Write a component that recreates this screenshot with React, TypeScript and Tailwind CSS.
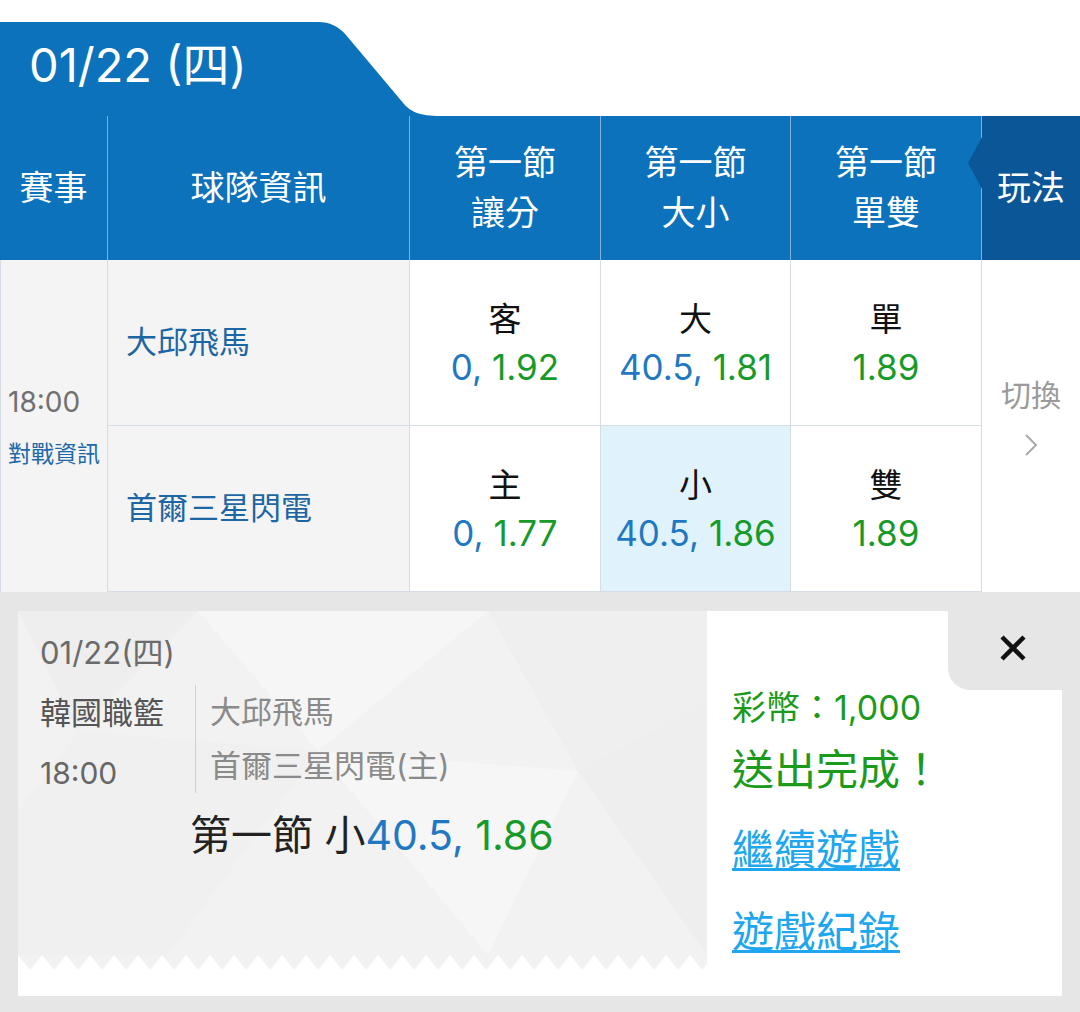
import React from "react";

const zigzag =
  "0,0 " +
  Array.from({ length: 29 }, (_, i) => `${i * 24 + 12},15 ${(i + 1) * 24},0`).join(" ");

function HeadCell({ lines }: { lines: string[] }) {
  return (
    <div className="flex flex-col items-center justify-center border-r border-[#7fb2dd]">
      {lines.map((l) => (
        <span key={l}>{l}</span>
      ))}
    </div>
  );
}

function OddsCell({
  label,
  line,
  price,
  active,
}: {
  label: string;
  line?: string;
  price: string;
  active?: boolean;
}) {
  return (
    <div
      className={`flex flex-col items-center justify-center border-r border-b border-[#d6dce4] ${
        active ? "bg-[#e0f3fc]" : "bg-white"
      }`}
    >
      <span className="text-[33px] leading-[48px] text-[#111]">{label}</span>
      <span className="text-[35px] leading-[48px]">
        {line && <span className="text-[#1f78c1]">{line}, </span>}
        <span className="text-[#189a2a]">{price}</span>
      </span>
    </div>
  );
}

function TeamCell({ name }: { name: string }) {
  return (
    <div className="flex items-center border-r border-b border-[#d6dce4] bg-[#f4f4f4] pl-[18px] text-[31px] text-[#1c66a3]">
      {name}
    </div>
  );
}

export default function App() {
  return (
    <div className="h-[1012px] w-[1080px] overflow-hidden bg-white font-['Inter','Noto_Sans_CJK_TC',sans-serif]">
      {/* date tab */}
      <div className="flex h-[116px] items-end">
        <div className="flex h-[94px] w-[300px] items-center bg-[#0c72bb] pb-[8px] pl-[29px] text-[47px] text-white">
          01/22 (四)
        </div>
        <svg width="140" height="94" viewBox="0 0 140 94" className="block">
          <path
            d="M0 0 H18 C30 0 38 4 46 13 L104 82 C111 90 120 94 140 94 H0 Z"
            fill="#0c72bb"
          />
        </svg>
      </div>

      {/* header row */}
      <div className="grid h-[144px] grid-cols-[108px_302px_191px_190px_191px_98px] bg-[#0c72bb] text-[34px] leading-[50px] text-white">
        <HeadCell lines={["賽事"]} />
        <HeadCell lines={["球隊資訊"]} />
        <HeadCell lines={["第一節", "讓分"]} />
        <HeadCell lines={["第一節", "大小"]} />
        <HeadCell lines={["第一節", "單雙"]} />
        <div className="relative flex items-center justify-center bg-[#0a5696]">
          玩法
          <span className="absolute left-[-14px] top-[21px] z-10 h-0 w-0 border-y-[26px] border-r-[14px] border-y-transparent border-r-[#0a5696]" />
        </div>
      </div>

      {/* body */}
      <div className="grid h-[332px] grid-cols-[108px_302px_191px_190px_191px_98px] grid-rows-[166px_166px]">
        <div className="row-span-2 flex flex-col justify-center border-l border-r border-[#d6dce4] bg-[#f4f4f4] pl-[7px]">
          <span className="text-[28px] leading-[36px] text-[#707070]">18:00</span>
          <span className="mt-[20px] text-[23px] leading-[28px] text-[#1e6aa8]">對戰資訊</span>
        </div>
        <TeamCell name="大邱飛馬" />
        <OddsCell label="客" line="0" price="1.92" />
        <OddsCell label="大" line="40.5" price="1.81" />
        <OddsCell label="單" price="1.89" />
        <div className="row-span-2 flex flex-col items-center justify-center bg-white pb-[20px]">
          <span className="text-[30px] leading-[40px] text-[#9a9a9a]">切換</span>
          <svg width="14" height="24" viewBox="0 0 14 24" className="mt-[18px]">
            <polyline points="2,2 12,12 2,22" fill="none" stroke="#aaaaaa" strokeWidth="2" />
          </svg>
        </div>
        <TeamCell name="首爾三星閃電" />
        <OddsCell label="主" line="0" price="1.77" />
        <OddsCell label="小" line="40.5" price="1.86" active />
        <OddsCell label="雙" price="1.89" />
      </div>

      {/* bet slip */}
      <div className="h-[420px] bg-[#e6e6e6] px-[18px] pt-[19px]">
        <div className="flex h-[385px]">
          <div className="flex w-[689px] flex-col bg-white">
            <div className="relative h-[344px] bg-[#f2f2f2]">
              <svg className="absolute inset-0" width="689" height="344" viewBox="0 0 689 344">
                <polygon points="0,0 180,0 60,120" fill="#eeeeee" />
                <polygon points="180,0 470,0 300,140" fill="#f6f6f6" />
                <polygon points="470,0 689,0 689,90 560,160" fill="#efefef" />
                <polygon points="60,120 300,140 150,344 0,344 0,200" fill="#f0f0f0" />
                <polygon points="300,140 560,160 470,344" fill="#f6f6f6" />
                <polygon points="560,160 689,90 689,344" fill="#eeeeee" />
              </svg>
              <div className="relative pl-[22px] pt-[22px]">
                <div className="text-[31px] leading-[40px] text-[#6b6b6b]">01/22(四)</div>
                <div className="mt-[12px] flex items-start">
                  <div className="flex w-[155px] flex-col">
                    <span className="text-[31px] leading-[56px] text-[#555]">韓國職籃</span>
                    <span className="mt-[4px] text-[30px] leading-[56px] text-[#666]">18:00</span>
                  </div>
                  <div className="flex flex-col border-l border-[#cfcfcf] pl-[14px] text-[31px] leading-[54px] text-[#8a8a8a]">
                    <span>大邱飛馬</span>
                    <span>首爾三星閃電(主)</span>
                  </div>
                </div>
                <div className="ml-[150px] mt-[9px] text-[41px] leading-[50px] text-[#222]">
                  第一節 小<span className="text-[#1f78c1]">40.5, </span>
                  <span className="text-[#189a2a]">1.86</span>
                </div>
              </div>
            </div>
            <svg width="689" height="15" viewBox="0 0 689 15" className="block">
              <polygon points={zigzag} fill="#f2f2f2" />
            </svg>
          </div>

          <div className="relative flex flex-1 flex-col items-start bg-white pl-[25px] pt-[75px]">
            <div className="absolute right-0 top-0 h-[79px] w-[114px] rounded-bl-[22px] bg-[#e6e6e6] pl-[50px] pt-[22px]">
              <svg width="30" height="30" viewBox="0 0 30 30">
                <path d="M4 4 L26 26 M26 4 L4 26" stroke="#111" strokeWidth="4.5" />
              </svg>
            </div>
            <span className="text-[34px] leading-[44px] text-[#1b9a1b]">彩幣：1,000</span>
            <span className="text-[42px] leading-[80px] text-[#1b9a1b]">送出完成！</span>
            <span className="text-[42px] leading-[80px] text-[#1ea6ee] underline decoration-[3px] underline-offset-[3px]">
              繼續遊戲
            </span>
            <span className="text-[42px] leading-[84px] text-[#1ea6ee] underline decoration-[3px] underline-offset-[3px]">
              遊戲紀錄
            </span>
          </div>
        </div>
      </div>
    </div>
  );
}
